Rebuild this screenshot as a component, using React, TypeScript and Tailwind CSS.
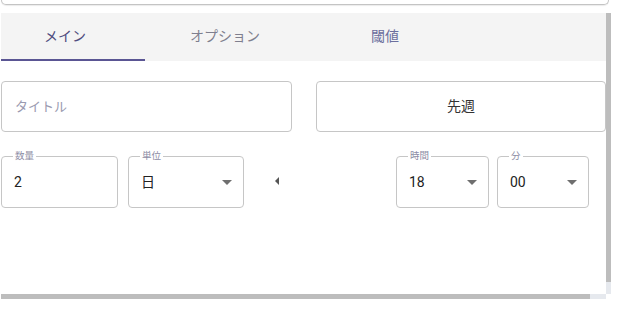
const Caret = () => (
  <svg width="10" height="5" viewBox="0 0 10 5" className="shrink-0">
    <path d="M0 0 L10 0 L5 5 Z" fill="#6f6f6f" />
  </svg>
);

type FieldProps = {
  label: string;
  value: string;
  width: string;
  select?: boolean;
};

const Field = ({ label, value, width, select }: FieldProps) => (
  <fieldset className={`${width} h-[57px] border border-[#c6c6c6] rounded-[4px]`}>
    <legend className="ml-[11px] px-[2px] text-[9.5px] leading-[10px] text-[#8c8ca4]">{label}</legend>
    <div className="h-[42px] flex items-center justify-between pl-[12px] pr-[11px] text-[14px] text-[#222]">
      <span>{value}</span>
      {select && <Caret />}
    </div>
  </fieldset>
);

const App = () => {
  return (
    <div className="w-[619px] h-[316px] bg-white overflow-hidden font-['Roboto','Noto_Sans_CJK_JP',sans-serif]">
      <div className="ml-px w-[608px] h-[5px] border-x border-b border-[#c4c4c4] rounded-b-[6px] shadow-[0_1px_1px_rgba(0,0,0,0.08)]" />

      {/* scroll area: viewport + drawn scrollbars */}
      <div className="mt-[8px] ml-px w-[610px] h-[286px] flex flex-col">
        <div className="flex h-[281px]">
          <div className="w-[605px] overflow-hidden">
            <div className="w-[621px] h-[293px]">
              <div className="h-[48px] bg-[#f4f4f4] flex overflow-hidden text-[14px]">
                <div className="-ml-[16px] w-[160px] shrink-0 flex flex-col">
                  <div className="flex-1 flex items-center justify-center text-[#4f4c7e]">メイン</div>
                  <div className="h-[2px] bg-[#5a5593]" />
                </div>
                <div className="w-[160px] shrink-0 flex items-center justify-center pb-[2px] text-[#7f7f8e]">オプション</div>
                <div className="w-[160px] shrink-0 flex items-center justify-center pb-[2px] text-[#6c6f9d]">閾値</div>
              </div>

              <div className="pt-[20px]">
                <div className="flex gap-[24px]">
                  <div className="w-[291px] h-[51px] border border-[#c6c6c6] rounded-[4px] flex items-center pl-[13px] text-[13px] text-[#9a9ab0]">
                    タイトル
                  </div>
                  <button className="w-[290px] h-[51px] border border-[#c6c6c6] rounded-[4px] bg-white flex items-center justify-center text-[14px] text-[#333]">
                    先週
                  </button>
                </div>

                <div className="mt-[19px] flex items-start">
                  <Field label="数量" value="2" width="w-[117px]" />
                  <div className="ml-[10px]">
                    <Field label="単位" value="日" width="w-[116px]" select />
                  </div>
                  <svg width="4" height="8" viewBox="0 0 4 8" className="ml-[31px] mt-[26px] shrink-0">
                    <path d="M4 0 L0 4 L4 8 Z" fill="#555" />
                  </svg>
                  <div className="ml-[117px]">
                    <Field label="時間" value="18" width="w-[93px]" select />
                  </div>
                  <div className="ml-[8px]">
                    <Field label="分" value="00" width="w-[92px]" select />
                  </div>
                </div>
              </div>
            </div>
          </div>
          <div className="w-[5px] bg-[#e6e9ee] flex flex-col">
            <div className="h-[269px] bg-[#bdbdbd]" />
          </div>
        </div>
        <div className="flex h-[5px]">
          <div className="w-[605px] bg-[#e6e9ee] flex">
            <div className="w-[589px] bg-[#bdbdbd]" />
          </div>
          <div className="w-[5px] bg-white" />
        </div>
      </div>
    </div>
  );
};

export default App;
